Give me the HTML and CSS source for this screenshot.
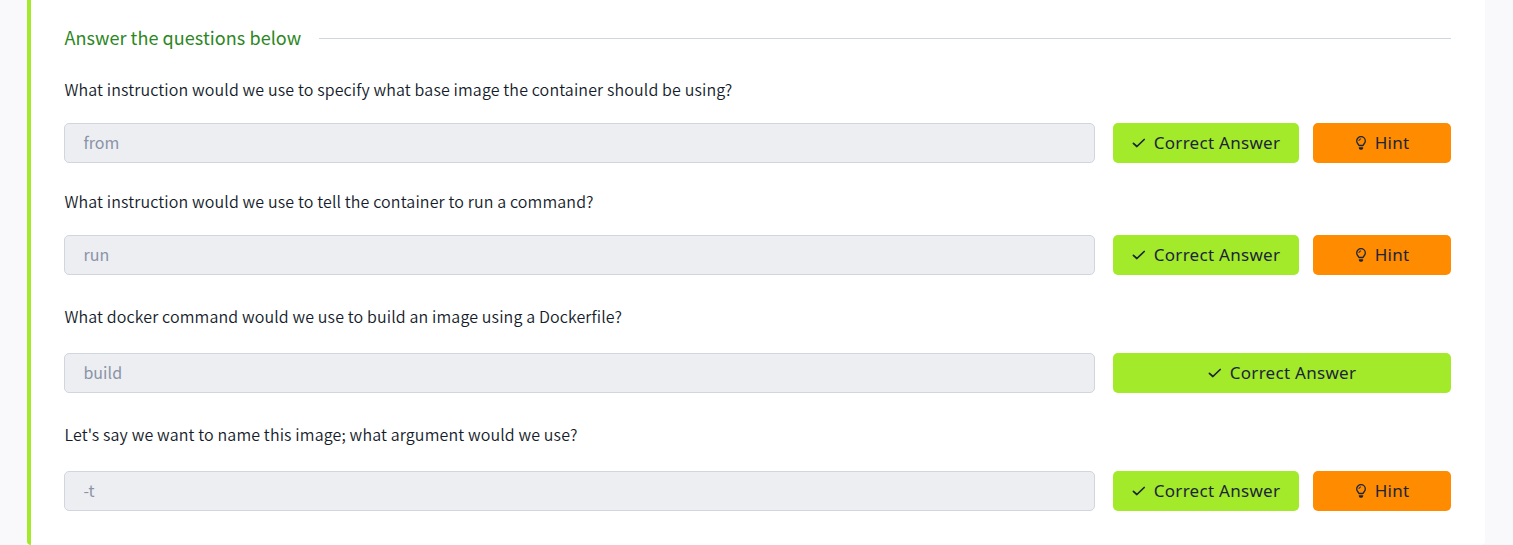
FILE: index.html
```html
<!DOCTYPE html>
<html lang="en">
<head>
<meta charset="utf-8">
<title>Questions</title>
<link rel="stylesheet" href="styles.css">
</head>
<body>
<svg class="defs" width="0" height="0" aria-hidden="true">
  <symbol id="check" viewBox="0 0 14 12"><path d="M1.400 6.300 4.900 9.500 12.200 2.500" fill="none" stroke="currentColor" stroke-width="1.700" stroke-linecap="round" stroke-linejoin="round"/></symbol>
  <symbol id="bulb" viewBox="0 0 12 16"><path d="M4 10.500C3.400 9 1.700 8.200 1.700 6a4.300 4.300 0 0 1 8.600 0C10.300 8.200 8.600 9 8 10.500Z" fill="none" stroke="currentColor" stroke-width="1.300" stroke-linejoin="round"/><path d="M3.900 6A2.100 2.100 0 0 1 6 3.900" fill="none" stroke="currentColor" stroke-width="1"/><path d="M3.800 12.300h4.400v.7a1.700 1.700 0 0 1-1.700 1.700H5.500a1.700 1.700 0 0 1-1.700-1.700Z" fill="currentColor"/></symbol>
</svg>
<main class="card">
  <header class="heading"><h2 class="title">Answer the questions below</h2><span class="rule"></span></header>
  <section class="question">
    <p class="prompt">What instruction would we use to specify what base image the container should be using?</p>
    <div class="row"><input class="answer" value="from" disabled><div class="actions"><button class="btn correct"><svg class="check"><use href="#check"/></svg><span class="label">Correct Answer</span></button><button class="btn hint"><svg class="bulb"><use href="#bulb"/></svg><span class="label">Hint</span></button></div></div>
  </section>
  <section class="question">
    <p class="prompt">What instruction would we use to tell the container to run a command?</p>
    <div class="row"><input class="answer" value="run" disabled><div class="actions"><button class="btn correct"><svg class="check"><use href="#check"/></svg><span class="label">Correct Answer</span></button><button class="btn hint"><svg class="bulb"><use href="#bulb"/></svg><span class="label">Hint</span></button></div></div>
  </section>
  <section class="question spaced">
    <p class="prompt">What docker command would we use to build an image using a Dockerfile?</p>
    <div class="row"><input class="answer" value="build" disabled><div class="actions"><button class="btn correct"><svg class="check"><use href="#check"/></svg><span class="label">Correct Answer</span></button></div></div>
  </section>
  <section class="question spaced">
    <p class="prompt">Let's say we want to name this image; what argument would we use?</p>
    <div class="row"><input class="answer" value="-t" disabled><div class="actions"><button class="btn correct"><svg class="check"><use href="#check"/></svg><span class="label">Correct Answer</span></button><button class="btn hint"><svg class="bulb"><use href="#bulb"/></svg><span class="label">Hint</span></button></div></div>
  </section>
</main>
</body>
</html>
```
FILE: styles.css
```css
* { box-sizing: border-box; }
body {
  margin: 0;
  padding: 0 28px 0 27px;
  background: #f9f9fb;
  color: #151c2b;
  font-family: "Noto Sans CJK SC", "Noto Sans", sans-serif;
  overflow: hidden;
}
.defs { display: block; position: absolute; }
.card {
  height: 545px;
  padding: 24px 34px 0 33px;
  background: #fff;
  border-left: 4px solid #a3ea2a;
  border-radius: 0 0 4px 4px;
}
.heading { display: flex; align-items: center; gap: 18px; height: 29px; }
.title { margin: 0; padding: 0 0 2px 0.4px; font-size: 18px; line-height: 27px; font-weight: 400; letter-spacing: 0.07px; color: #2b8723; white-space: nowrap; }
.rule { flex: 1; height: 1px; background: #d1d5df; }
.question { padding-top: 22px; }
.question + .question { padding-top: 24px; }
.question + .spaced { padding-top: 27px; }
.prompt { margin: 0 0 20px; padding-left: 0.4px; font-size: 16px; font-weight: 350; line-height: 28px; letter-spacing: 0.132px; white-space: nowrap; }
.spaced .prompt { margin-bottom: 23px; }
.row { display: flex; gap: 18px; }
.answer {
  flex: 1;
  min-width: 0;
  height: 40px;
  padding: 0 18px 2px 18.4px;
  border: 1px solid #d1d5df;
  border-radius: 5px;
  background: #edeef2;
  color: #8a93a6;
  font: 16px "Noto Sans CJK SC", sans-serif;
  letter-spacing: 0.06px;
}
.actions { display: flex; gap: 14px; width: 338px; }
.btn {
  display: flex;
  align-items: center;
  justify-content: center;
  height: 40px;
  padding: 0;
  border: 0;
  border-radius: 5px;
  color: #1c2538;
  font: 17px "Noto Sans", sans-serif;
}
.correct { flex: 1; background: #a3ea2a; }
.hint { width: 138px; background: #ff8b00; }
.check { width: 14px; height: 12px; margin-right: 8px; }
.bulb { width: 12px; height: 16px; margin-right: 8px; }
.label { padding-bottom: 2px; letter-spacing: 0.28px; white-space: nowrap; }
```
